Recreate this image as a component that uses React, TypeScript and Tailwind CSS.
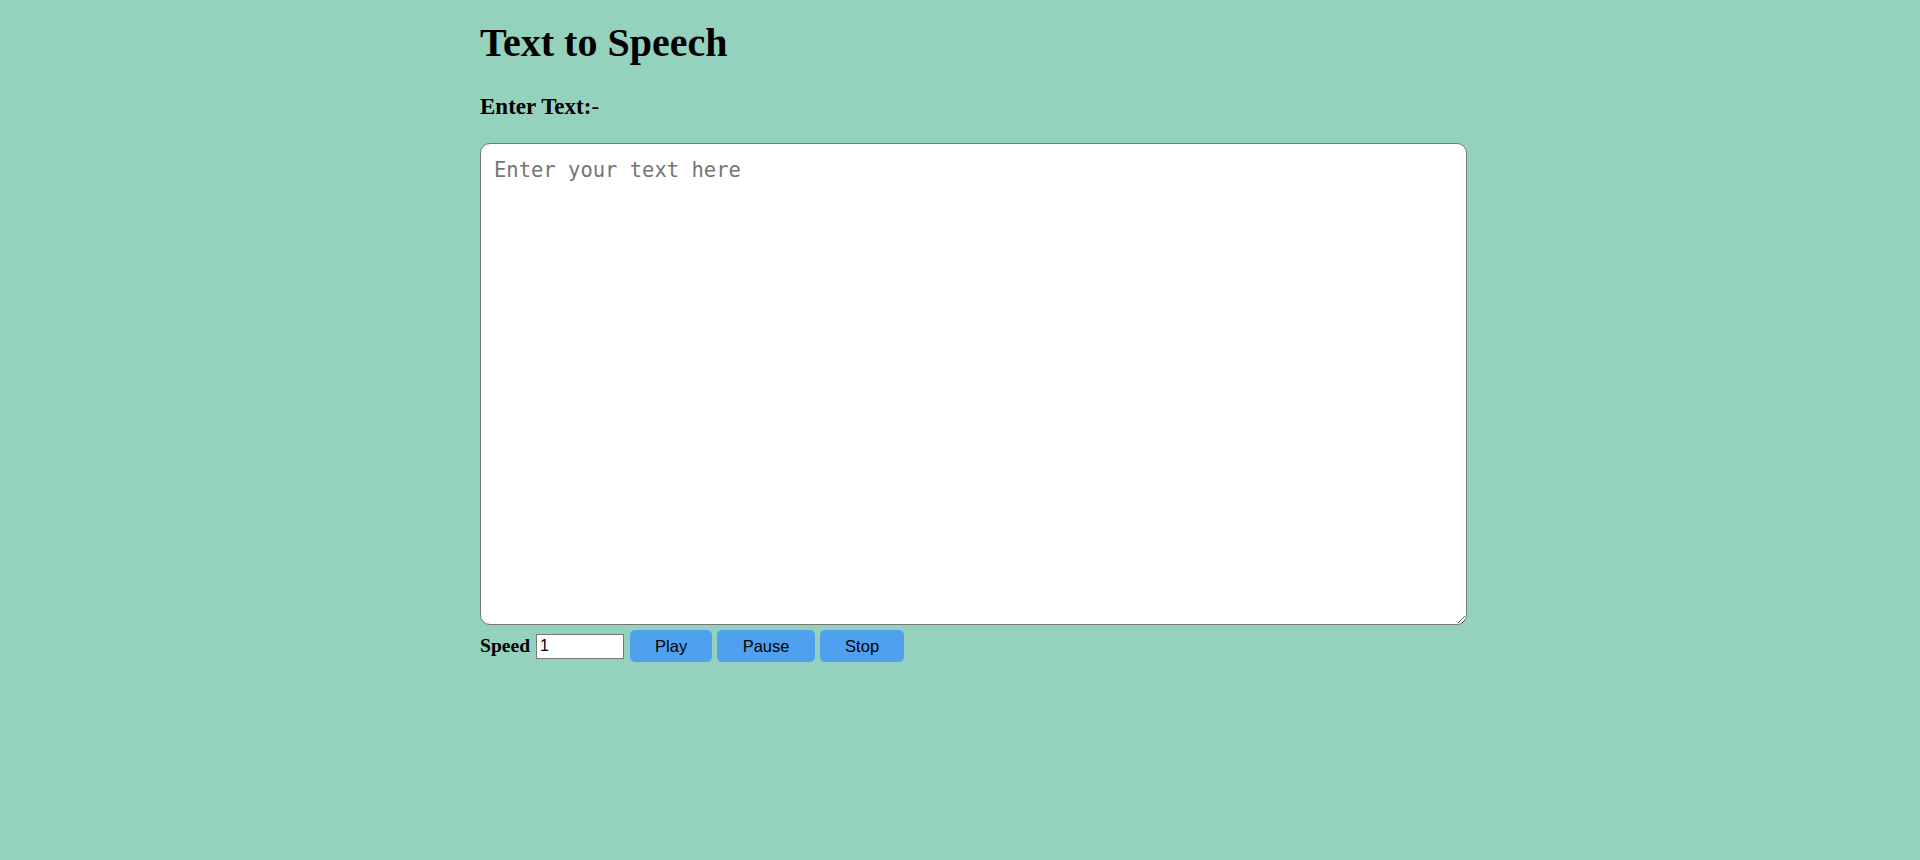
import { useState } from "react";

export default function App() {
  const [text, setText] = useState("");
  const [speed, setSpeed] = useState("1");

  return (
    <div className="h-[860px] w-full overflow-hidden bg-[#95d2bd] text-black">
      <div className="ml-[480px] w-[987px] pt-[20px]" style={{ fontFamily: '"Liberation Serif", "Times New Roman", serif' }}>
        <h1 className="text-[40px] font-bold leading-[46px]">Text to Speech</h1>

        <h3 className="mt-[28px] text-[23px] leading-[26px]">
          <span className="font-bold">Enter Text:</span>-
        </h3>

        {/* text box */}
        <textarea
          value={text}
          onChange={(e) => setText(e.target.value)}
          placeholder="Enter your text here"
          className="mt-[23px] block h-[482px] w-[987px] resize rounded-[10px] border border-[#767676] bg-white px-[13px] pt-[11px] pb-[6px] text-[20.5px] leading-[30px] text-black placeholder:text-[#757575] focus:outline-none"
          style={{ fontFamily: '"DejaVu Sans Mono", monospace' }}
        />

        {/* controls */}
        <div className="mt-[5px] flex items-center">
          <span className="text-[19.6px] font-bold leading-[22px]">Speed</span>
          <input
            value={speed}
            onChange={(e) => setSpeed(e.target.value)}
            className="ml-[6px] h-[25px] w-[88px] border border-[#767676] bg-white px-[3px] text-[16px] text-black focus:outline-none"
            style={{ fontFamily: '"Liberation Sans", Arial, sans-serif' }}
          />
          <div className="ml-[6px] flex gap-[5px]" style={{ fontFamily: '"Liberation Sans", Arial, sans-serif' }}>
            <button className="h-[32px] w-[82px] rounded-[5px] bg-[#4fa1f0] text-[16.5px] text-black">Play</button>
            <button className="h-[32px] w-[98px] rounded-[5px] bg-[#4fa1f0] text-[16.5px] text-black">Pause</button>
            <button className="h-[32px] w-[84px] rounded-[5px] bg-[#4fa1f0] text-[16.5px] text-black">Stop</button>
          </div>
        </div>
      </div>
    </div>
  );
}
